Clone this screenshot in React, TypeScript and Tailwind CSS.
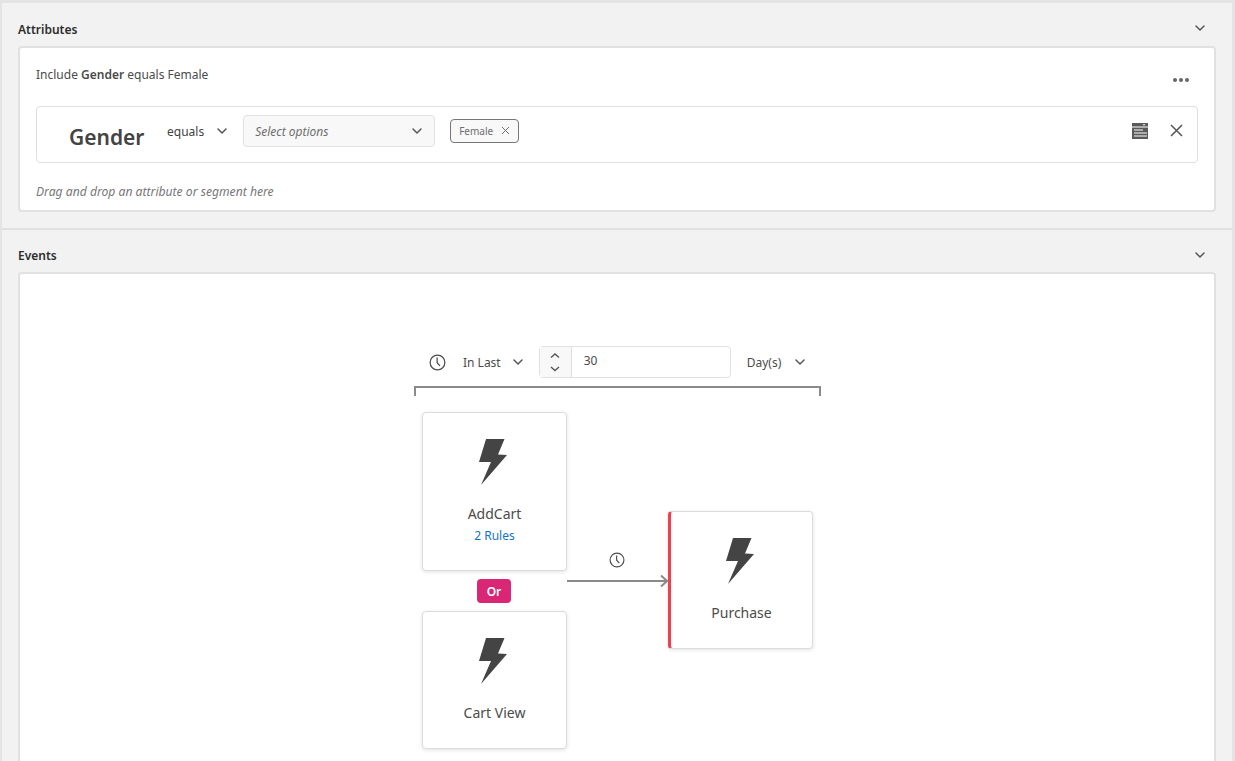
import { ChevronDown } from "lucide-react";

const Bolt = ({ className }: { className: string }) => (
  <svg className={className} width="28" height="46" viewBox="0 0 28 46">
    <polygon points="7,0 25.5,0 19,15.5 28,16 2,46 12,23 0,23" fill="#444444" />
  </svg>
);

const Clock = ({ size = 17 }: { size?: number }) => (
  <svg width={size} height={size} viewBox="0 0 18 18" fill="none" stroke="#4b4b4b" strokeWidth="1.3">
    <circle cx="9" cy="9" r="7.8" />
    <path d="M8.6 3.8v5.4l3 3.4" />
  </svg>
);

const Chevron = ({ className = "" }: { className?: string }) => (
  <ChevronDown className={className} size={16} strokeWidth={2.2} color="#555555" />
);

const Card = ({ title, rules, className }: { title: string; rules?: string; className: string }) => (
  <div className={`absolute flex w-[145px] flex-col items-center rounded-[4px] border border-[#dcdcdc] bg-white pt-[26px] shadow-[0_1px_4px_rgba(0,0,0,0.12)] ${className}`}>
    <Bolt className="ml-[-4px]" />
    <div className="mt-[19px] text-[14px] leading-[20px] text-[#4b4b4b]">{title}</div>
    {rules ? <div className="mt-[4px] text-[12px] leading-[16px] text-[#1473c9]">{rules}</div> : null}
  </div>
);

const SectionHeader = ({ title, className }: { title: string; className: string }) => (
  <div className={`flex items-center justify-between pl-[16px] pr-[24px] ${className}`}>
    <span className="text-[12px] font-semibold text-[#2c2c2c]">{title}</span>
    <Chevron className="mt-[-3px]" />
  </div>
);

export default function App() {
  return (
    <div className="h-[761px] w-[1235px] overflow-hidden border-l-2 border-r-[3px] border-t-[3px] border-[#e4e4e4] bg-[#f2f2f2] font-['Noto_Sans',sans-serif]">
      <section className="h-[227px] border-b-2 border-[#e1e1e1]">
        <SectionHeader title="Attributes" className="h-[43px] pt-[10px]" />
        <div className="ml-[16px] h-[166px] w-[1198px] rounded-[4px] border-2 border-[#e1e1e1] bg-white px-[16px] pt-[18px]">
          <div className="flex h-[40px] justify-between">
            <div className="text-[12px] leading-[17px] text-[#4b4b4b]">
              Include <b className="font-semibold">Gender</b> equals Female
            </div>
            <div className="mr-[9px] mt-[12px] flex gap-[2px]">
              <span className="h-[4px] w-[4px] rounded-full bg-[#666666]" />
              <span className="h-[4px] w-[4px] rounded-full bg-[#666666]" />
              <span className="h-[4px] w-[4px] rounded-full bg-[#666666]" />
            </div>
          </div>
          <div className="flex h-[57px] items-center rounded-[4px] border border-[#dfdfdf] pb-[8px] pl-[32px] pr-[14px]">
            <span className="mt-[13px] w-[98px] text-[21px] font-semibold leading-[28px] text-[#444444]">Gender</span>
            <span className="mt-[2px] text-[12px] text-[#3f3f3f]">equals</span>
            <Chevron className="ml-[10px]" />
            <div className="ml-[13px] flex h-[32px] w-[192px] items-center justify-between rounded-[4px] border border-[#e1e1e1] bg-[#f8f8f8] pl-[11px] pr-[9px]">
              <span className="mt-[2px] text-[12px] italic text-[#6e6e6e]">Select options</span>
              <Chevron />
            </div>
            <div className="ml-[15px] flex h-[24px] w-[69px] items-center justify-between rounded-[4px] border border-[#767676] bg-[#f8f8f8] px-[8px]">
              <span className="mt-[2px] text-[10px] text-[#6e6e6e]">Female</span>
              <svg width="9" height="9" viewBox="0 0 9 9" stroke="#6e6e6e" strokeWidth="1">
                <path d="M1 1l7 7M8 1l-7 7" />
              </svg>
            </div>
            <svg className="ml-auto" width="16" height="16" viewBox="0 0 16 16">
              <path fill="#5a5a5a" d="M0 0h16v3.5H0z" />
              <path fill="#ffffff" d="M10.5 1.2h3l-1.5 1.6z" />
              <path fill="#5a5a5a" d="M0 4.5h16V16H0z" />
              <path stroke="#ffffff" strokeWidth="1" d="M2 7h9M2 10h13M2 13h13" />
            </svg>
            <svg className="ml-[22px]" width="13" height="13" viewBox="0 0 13 13" stroke="#5a5a5a" strokeWidth="1.6">
              <path d="M1 1l11 11M12 1L1 12" />
            </svg>
          </div>
          <div className="mt-[20px] text-[12.15px] italic leading-[17px] text-[#777777]">
            Drag and drop an attribute or segment here
          </div>
        </div>
      </section>
      <section>
        <SectionHeader title="Events" className="h-[42px] pt-[10px]" />
        <div className="relative ml-[16px] h-[600px] w-[1198px] rounded-[4px] border-2 border-[#e1e1e1] bg-white">
          <div className="absolute left-[409px] top-[80px]">
            <Clock />
          </div>
          <div className="absolute left-[443px] top-[72px] flex h-[32px] items-center">
            <span className="mt-[2px] text-[12px] text-[#4b4b4b]">In Last</span>
            <Chevron className="ml-[9px]" />
            <div className="ml-[13px] flex h-[32px] w-[192px] rounded-[4px] border border-[#e1e1e1] bg-white">
              <div className="flex w-[32px] flex-col items-center justify-center border-r border-[#e1e1e1] bg-[#f8f8f8]">
                <svg width="10" height="22" viewBox="0 0 10 22" fill="none" stroke="#555555" strokeWidth="1.4">
                  <path d="M1 6.5L5 3l4 3.5M1 16l4 3.5 4-3.5" />
                </svg>
              </div>
              <span className="pl-[12px] text-[12px] leading-[28px] text-[#4b4b4b]">30</span>
            </div>
            <span className="ml-[16px] mt-[2px] text-[12px] text-[#4b4b4b]">Day(s)</span>
            <Chevron className="ml-[11px]" />
          </div>
          <div className="absolute left-[394px] top-[112px] h-[10px] w-[407px] border-x-2 border-t-2 border-[#8a8a8a]" />
          <Card title="AddCart" rules="2 Rules" className="left-[402px] top-[138px] h-[159px]" />
          <div className="absolute left-[457px] top-[305px] flex h-[24px] w-[34px] items-center justify-center rounded-[4px] bg-[#d92775] pt-[1px] text-[12px] font-semibold text-white">
            Or
          </div>
          <Card title="Cart View" className="left-[402px] top-[337px] h-[138px]" />
          <div className="absolute left-[589px] top-[278px]">
            <Clock size={16} />
          </div>
          <svg className="absolute left-[547px] top-[300px]" width="102" height="14" viewBox="0 0 102 14" fill="none" stroke="#8a8a8a" strokeWidth="2">
            <path d="M0 7h100M94 1.5L100 7l-6 5.5" />
          </svg>
          <Card title="Purchase" className="left-[648px] top-[237px] h-[138px] border-l-[3px] border-l-[#f0404f]" />
        </div>
      </section>
    </div>
  );
}
